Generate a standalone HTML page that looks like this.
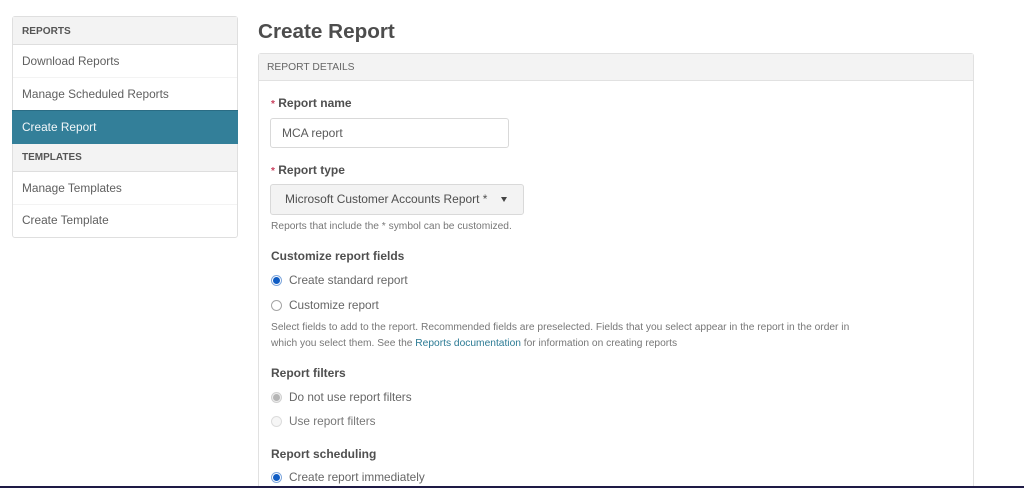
<!DOCTYPE html>
<html><head><meta charset="utf-8"><style>
html,body{margin:0;padding:0;background:#fff;width:1024px;height:488px;overflow:hidden}
body{position:relative;font-family:"Liberation Sans",Arial,sans-serif;color:#555}
#w{position:absolute;left:0;top:0;width:1024px;height:488px;overflow:hidden;filter:blur(0.25px)}
.a{position:absolute;white-space:nowrap}
.t{line-height:16px;height:16px}
.n{font-size:11.85px;color:#5f5f5f;left:22px}
.h{font-size:10.1px;font-weight:bold;color:#555;left:22px}
.l{font-size:12px;font-weight:bold;color:#4f4f4f;left:271px}
.o{font-size:11.8px;color:#666;left:289px}
.s{font-size:10.22px;color:#777;left:271px}
.r{position:absolute;left:271px;width:11px;height:11px;border-radius:50%;box-sizing:border-box}
.on{border:1px solid #7ea6dc;background:#fff}
.on:after{content:"";position:absolute;left:1px;top:1px;width:7px;height:7px;border-radius:50%;background:#0f5cc4}
.off{border:1px solid #a5a5a5;background:#fff}
.dis{border:1px solid #dcdcdc;background:#f6f6f6}
.dison{border:1px solid #d0d0d0;background:#eee}
.dison:after{content:"";position:absolute;left:1px;top:1px;width:7px;height:7px;border-radius:50%;background:#b5b5b5}
.star{color:#c9415f;font-size:10px;position:relative;top:0}
</style></head><body><div id="w">
<div class="a" style="left:12px;top:16px;width:226px;height:222px;box-sizing:border-box;border:1px solid #dfdfdf;border-radius:3px;background:#fff"></div>
<div class="a" style="left:13px;top:17px;width:224px;height:27px;background:#f3f3f3;border-bottom:1px solid #dedede"></div>
<div class="a t h" style="top:24px">REPORTS</div>
<div class="a t n" style="top:53px">Download Reports</div>
<div class="a" style="left:13px;top:77px;width:224px;height:1px;background:#f3f3f3"></div>
<div class="a t n" style="top:86px">Manage Scheduled Reports</div>
<div class="a" style="left:12px;top:110px;width:226px;height:34px;background:#337f99;border-top:1px solid #2a6c84;box-sizing:border-box"></div>
<div class="a t n" style="top:119px;color:#f2f7f9">Create Report</div>
<div class="a" style="left:13px;top:144px;width:224px;height:27px;background:#f3f3f3;border-bottom:1px solid #dedede"></div>
<div class="a t h" style="top:150px;font-size:10px">TEMPLATES</div>
<div class="a t n" style="top:180px">Manage Templates</div>
<div class="a" style="left:13px;top:204px;width:224px;height:1px;background:#f3f3f3"></div>
<div class="a t n" style="top:212px">Create Template</div>

<div class="a" style="left:258px;top:19px;font-size:20.7px;font-weight:bold;line-height:26px;color:#4d4d4d">Create Report</div>

<div class="a" style="left:258px;top:53px;width:716px;height:433px;box-sizing:border-box;border:1px solid #e1e1e1;border-bottom:0;border-radius:3px 3px 0 0;background:#fff"></div>
<div class="a" style="left:259px;top:54px;width:714px;height:26px;background:#f3f3f3;border-bottom:1px solid #e1e1e1"></div>
<div class="a t" style="left:267px;top:60px;font-size:10.3px;color:#666">REPORT DETAILS</div>

<div class="a t l" style="top:95px"><span class="star">*</span> Report name</div>
<div class="a" style="left:270px;top:118px;width:239px;height:30px;box-sizing:border-box;border:1px solid #d9d9d9;border-radius:3px;background:#fff"></div>
<div class="a t" style="left:282px;top:125px;font-size:12px;color:#5a5a5a">MCA report</div>

<div class="a t l" style="top:162px"><span class="star">*</span> Report type</div>
<div class="a" style="left:270px;top:184px;width:254px;height:31px;box-sizing:border-box;border:1px solid #d9d9d9;border-radius:3px;background:#f3f3f3"></div>
<div class="a t" style="left:285px;top:191px;font-size:11.95px;color:#4f4f4f">Microsoft Customer Accounts Report *</div>
<svg class="a" style="left:501px;top:197px" width="6" height="5" viewBox="0 0 6 5"><path d="M0 0H6L3 5Z" fill="#444"/></svg>
<div class="a t s" style="top:219px">Reports that include the * symbol can be customized.</div>

<div class="a t l" style="top:248px">Customize report fields</div>
<div class="r on" style="top:275px"></div>
<div class="a t o" style="top:272px">Create standard report</div>
<div class="r off" style="top:300px"></div>
<div class="a t o" style="top:297px">Customize report</div>
<div class="a t s" style="top:320px">Select fields to add to the report. Recommended fields are preselected. Fields that you select appear in the report in the order in</div>
<div class="a t s" style="top:336px">which you select them. See the <span style="color:#2b7a94">Reports documentation</span> for information on creating reports</div>

<div class="a t l" style="top:365px">Report filters</div>
<div class="r dison" style="top:392px"></div>
<div class="a t o" style="top:389px">Do not use report filters</div>
<div class="r dis" style="top:416px"></div>
<div class="a t o" style="top:413px;color:#777">Use report filters</div>

<div class="a t l" style="top:446px">Report scheduling</div>
<div class="r on" style="top:472px"></div>
<div class="a t o" style="top:469px">Create report immediately</div>

<div class="a" style="left:0;top:486px;width:1024px;height:2px;background:#1e1a45"></div>
</div></body></html>
